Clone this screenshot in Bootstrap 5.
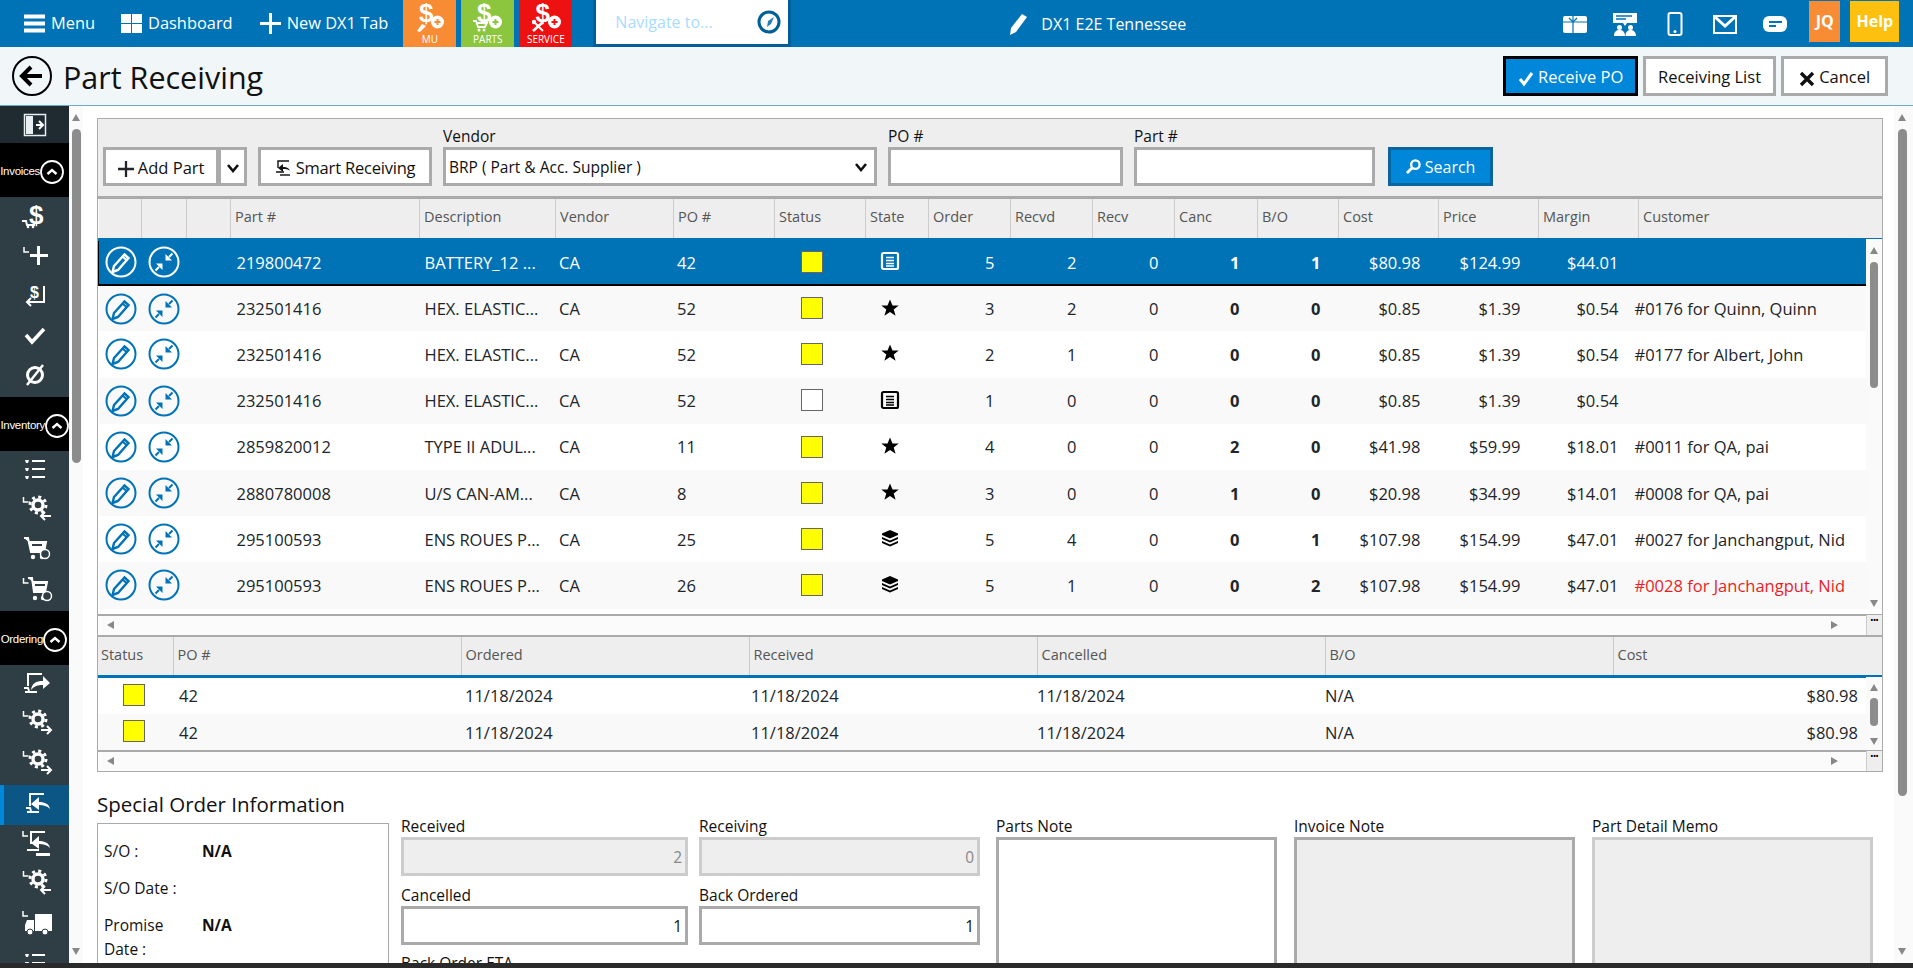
<!DOCTYPE html>
<html lang="en">
<head>
<meta charset="utf-8">
<title>Part Receiving</title>
<link href="https://cdn.jsdelivr.net/npm/bootstrap@5.3.0/dist/css/bootstrap.min.css" rel="stylesheet">
<style>
html,body{height:968px;overflow:hidden}
body{font-family:"Open Sans","Noto Sans",sans-serif;font-size:15.5px;color:#111;background:#fff}
.pg{height:968px;width:1913px}
.tbar{height:47px;background:#0073b7;color:#fff;flex:none}
.tlink{color:#fff;font-size:16.4px;gap:6px;white-space:nowrap;text-decoration:none}
.tlink svg{width:21px;height:21px}
.l1{margin-left:24px}.l2{margin-left:26px}.l3{margin-left:27px}
.tile{width:53px;height:47px;color:#fff;font-size:10px;line-height:12px;padding-bottom:2px;margin-right:5px}
.tile svg{width:44px;height:33px}
.t-mu{margin-left:15px;background:#f78c34}.t-pa{background:#8cc63f}.t-se{background:#ee1111;margin-right:21px}
.navbox{width:198px;height:47px;background:#fff;border-left:3px solid #005f99;border-right:3px solid #005f99;border-bottom:3px solid #005f99;padding:0 7px 0 19px;color:#a8dcff;font-size:16px}
.navbox svg{width:24px;height:24px}
.site{margin-left:215px;width:190px;gap:13px;font-size:16px;white-space:nowrap}
.site svg{width:22px;height:22px}
.ticons{margin-left:367px;gap:26px}
.ticons svg{width:24px;height:24px;display:block}
.tb-jq,.tb-help{height:41px;margin-top:-5px;color:#fff;font-weight:700;font-size:16px}
.tb-jq{width:31px;background:#f78c34;margin-left:-4px}
.tb-help{width:49px;background:#fdc00f;margin-left:-16px}
.phead{height:59px;background:#f1f6f9;border-bottom:1px solid #6fa8d0;flex:none;padding:0 25px 0 12px}
.phead h1{font-size:30.5px;font-weight:400;margin:2px 0 0 11px;color:#111}
.backc{width:40px;height:40px}
.hbtn{height:40px;border:3px solid #aaa;border-radius:0;background:#fff;color:#111;font-size:16.5px;padding:3px 0 0;white-space:nowrap;--bs-btn-hover-bg:#fff}
.hb-r{width:135px;background:#0087d9;border-color:#000;color:#fff;margin-right:5px}
.hb-l{width:133px;margin-right:5px}
.hb-c{width:107px}
.midsec{flex:1 1 0;min-height:0}
.sbar{width:69px;background:#2f3d45;overflow:hidden;flex:none}
.s-top{height:37px;background:#1f2a31}
.s-head{height:54px;flex:none;background:#000;color:#fff;font-family:"Liberation Sans",sans-serif;font-size:11.5px;letter-spacing:-.3px;justify-content:flex-end;white-space:nowrap;overflow:hidden;padding-top:4px}
.s-head svg{width:24px;height:24px;flex:none}
.s-i svg{margin-right:5px}.s-n svg{margin-right:0}.s-o svg{margin-right:2px}
.s-item{height:40px;flex:none;color:#fff}
.s-top.s-item{height:37px}
.s-item svg{width:36px;height:30px;margin-bottom:5px}
.s-top.s-item svg{margin-bottom:0}
.s-act{background:#0b5684;border-left:4px solid #0089d9}
.vstrip{width:14px;background:#fafafa;flex:none;position:relative}
.arr-u,.arr-d,.arr-l,.arr-r{position:absolute;width:0;height:0}
.arr-u{border-left:4.5px solid transparent;border-right:4.5px solid transparent;border-bottom:7px solid #888}
.arr-d{border-left:4.5px solid transparent;border-right:4.5px solid transparent;border-top:7px solid #888}
.arr-l{border-top:4.5px solid transparent;border-bottom:4.5px solid transparent;border-right:7px solid #888}
.arr-r{border-top:4.5px solid transparent;border-bottom:4.5px solid transparent;border-left:7px solid #888}
.thumb{position:absolute;background:#8c8c8c;border-radius:5px}
.sl-au{left:3px;top:8px}.sl-th{left:3px;top:23px;width:9px;height:334px}.sl-ad{left:3px;top:842px}
.mainc{width:1811px;flex:none;overflow:hidden;padding:12px 11px 0 14px}
.rstrip{width:19px}
.sr-au{left:4px;top:8px}.sr-th{left:4px;top:23px;width:9px;height:667px}.sr-ad{left:4px;top:842px}
.gridbox{width:1786px;border:1px solid #aaa}
.filt{height:80px;background:#eee;border-bottom:3px solid #aaa;padding:0 0 10px 5px;gap:11px;align-items:flex-end}
.fld label{display:block;font-size:15.5px;line-height:20px;height:21px}
.ctl{border:3px solid #aaa;border-radius:0;height:39px;background-color:#fff;font-size:15.5px;color:#111;box-shadow:none}
.f-add{height:39px}
.f-add .btn{border:3px solid #aaa;border-radius:0;background:#fff;color:#111;font-size:16.5px;padding:3px 0 0;height:39px;white-space:nowrap}
.f-add .b1{width:116px}.f-add .b2{width:29px;margin-left:-3px;padding-top:0}
.f-smart{width:174px;height:39px;border:3px solid #aaa;border-radius:0;background:#fff;color:#111;font-size:16.5px;padding:3px 0 0;white-space:nowrap;letter-spacing:-.2px}
.f-smart svg{width:17px;height:18px;vertical-align:-3px}
.w-ven{width:434px}.w-po{width:235px}.w-pn{width:241px}
.selb{padding:3px 30px 0 3px;background-image:url("data:image/svg+xml,%3Csvg xmlns='http://www.w3.org/2000/svg' viewBox='0 0 14 10'%3E%3Cpath d='M2 2l5 6 5-6' fill='none' stroke='%23111' stroke-width='2.6'/%3E%3C/svg%3E");background-size:14px 10px;background-position:right 6px center}
.f-srch{width:105px;height:39px;background:#0087d9;border:3px solid #0a64a0;border-radius:0;color:#fff;font-size:16px;padding:1px 0 0;margin-left:2px;--bs-btn-hover-bg:#0087d9}
.f-srch svg{width:15px;height:15px;vertical-align:-1px}
.g1{height:417px;position:relative;overflow:hidden;border-bottom:2px solid #aaa}
.g2{height:115px;position:relative;overflow:hidden;border-bottom:2px solid #aaa}
.dtab{table-layout:fixed;width:1784px;margin:0}
.dtab>:not(caption)>*>*{padding:0;border-width:0;vertical-align:middle;white-space:nowrap;overflow:hidden;box-shadow:none}
.dtab thead th{background:#eee;color:#555;font-weight:400;font-size:14.5px;border-right:1px solid #ccc;border-bottom:3px solid #0073b7;padding:0 0 3px 4px;height:40px}
.dtab thead th:last-child{border-right:0}
.dtab tbody tr{--bs-table-bg:#fff}
.dtab tbody tr:nth-child(even){--bs-table-bg:#f9f9f9}
.g1 tbody td{height:46.2px;font-size:16.5px;padding:2px 0 0 6px}
.g1 tbody td:nth-child(5){padding-left:5px}
.g1 tbody td:nth-child(6),.g1 tbody td:nth-child(7){padding-left:3.5px}
.g1 td.rt{text-align:right;padding-right:16px}
.g1 td.pr{padding-right:18px}
.g1 tbody td.st{padding:0 0 3px 26px}
.g1 tbody td.ct{text-align:center;padding:0 14px 2px 0}
.g1 td.bd{font-weight:700;padding-right:18px}
.g1 td.mn{padding-right:20px}
.g1 tbody td.cirs{padding:0 0 0 1px}
.g1 tbody td.cirs+td.cirs{padding-left:0}
.g1 tbody td.cust{padding-left:0;overflow:visible;text-indent:-4px}
.cirs svg{width:32px;height:32px;color:#0073b7;display:block;margin:0 auto}
tr.sel{--bs-table-bg:#0073b7!important;--bs-table-color:#fff}
tr.sel td{color:#fff;background:#0073b7;border-top:1px solid #000!important;border-bottom:2px solid #000!important}
tr.sel td:first-child{border-left:1px solid #000!important}
tr.sel .cirs svg{color:#fff}
.swt{display:inline-block;width:22px;height:22px;background:#ff0;border:1px solid #666;vertical-align:middle}
.swt.nil{background:#fff}
.sta{width:20px;height:20px;display:block;margin:0 auto;color:#000}
.sel .sta{color:#fff}
.rd{color:#ee1c25}
.col-a{width:43px}.col-b{width:45px}.col-c{width:44px}.col-d{width:189px}.col-e{width:136px}.col-f{width:118px}.col-g{width:101px}.col-h{width:91px}.col-i{width:63px}.col-j{width:82px}.col-k{width:83px}.col-l{width:81px}.col-m{width:100px}.col-n{width:244px}
.c2a{width:75px}.c2b{width:288px}.c2c{width:269px}
.g2 tbody td{font-size:16.5px;padding:2px 0 0 4px}
.g2 tbody td:nth-child(1){padding:0 0 4px 25px}
.g2 tbody td:nth-child(2){padding-left:6px}
.g2 tbody td:nth-child(4){padding-left:2px}
.g2 tbody td:nth-child(5),.g2 tbody td:nth-child(6){padding-left:0}
.g2 tbody tr:first-child td{height:38px}
.g2 tbody tr:last-child td{height:36px}
.g2 thead th{height:39px;padding-bottom:2px}
.g2 thead th:first-child{padding-left:3px}
.vs{position:absolute;right:0;top:40px;bottom:6px;width:16px;background:#fafafa}
.g2 .vs{bottom:0}
.v1au{left:4px;top:8px}.v1th{left:4px;top:23px;width:8px;height:126px}.v1ad{left:4px;bottom:1px}
.v2au{left:4px;top:7px}.v2th{left:4px;top:21px;width:8px;height:28px}.v2ad{left:4px;bottom:5px}
.hs{height:21px;position:relative;background:#fbfbfb;border-bottom:2px solid #aaa;flex:none}
.hs.last{border-bottom:0;height:19px}
.hl{left:9px;top:5px}.hr{right:44px;top:5px}
.dots{position:absolute;right:0;top:-1px;bottom:0;width:16px;background:#eee;border-left:1px solid #ccc;font-size:7px;line-height:12px;text-align:center;font-weight:700;letter-spacing:0;color:#000}
.soi{margin-top:17px}
.soi-l{width:292px;flex:none}
.soi-l h2{font-size:20.5px;font-weight:400;line-height:30px;height:30px;margin:0;color:#111;white-space:nowrap}
.infobox{margin-top:4px;border:1px solid #aaa;height:200px;padding:15px 6px}
.irow{line-height:24px;font-size:15.5px;margin-bottom:13px}
.irow .k{width:98px;flex:none}
.irow .v{font-weight:700}
.irow.tw{margin-bottom:0}
.soi-c{margin-top:27px;margin-left:12px;flex:none}
.w287{width:287px}.w281{width:281px;margin-left:11px}
.w282{width:281px;margin-left:17px}.w282a{width:281px;margin-left:16px}
.lb{font-size:15.5px;line-height:20px;height:21px;white-space:nowrap}
.ro{background:#eee;border-color:#ccc;color:#888;text-align:right;padding:0 3px}
.ed{text-align:right;padding:0 3px;color:#111;margin-bottom:8px}
.ro{margin-bottom:9px}
.ctl:disabled{background:#eee}
.ta{height:170px;resize:none;padding:3px;display:block;width:100%}
.taw{border-width:3px;border-color:#aaa}
.tag{background:#eee;border-color:#aaa}
.tal{background:#eee;border-color:#ccc}
.btm{height:5px;background:#2a2a2a;flex:none}
</style>
</head>
<body>
<svg width="0" height="0" class="position-absolute">
<defs>
<symbol id="burger" viewBox="0 0 21 21"><path d="M0 2h21v4H0zM0 9h21v4H0zM0 16h21v4H0z" fill="#fff" transform="translate(0 -.5)"/></symbol>
<symbol id="dash" viewBox="0 0 21 21"><path d="M0 1h10v9H0zM11 1h10v9H11zM0 11h10v9H0zM11 11h10v9H11z" fill="#fff"/></symbol>
<symbol id="plusw" viewBox="0 0 21 21"><path d="M9 0h3v9h9v3h-9v9H9v-9H0V9h9z" fill="currentColor"/></symbol>
<symbol id="penc" viewBox="0 0 22 22"><path d="M16 1l5 3-11 15-6 3 1-7z" fill="#fff"/></symbol>
<symbol id="ic-compass" viewBox="0 0 24 24"><circle cx="12" cy="12" r="10" fill="none" stroke="#005f99" stroke-width="3"/><path d="M17 7l-3 7-4 3 1-6z" fill="#2a7fb5"/></symbol>
<symbol id="ic-card" viewBox="0 0 24 24"><rect x="0" y="4" width="24" height="17" rx="2" fill="#fff"/><path d="M0 10h24M10 4v17" stroke="#0073b7" stroke-width="1.2"/><path d="M10 10l-4-4M10 10l4-4" stroke="#0073b7" stroke-width="1.2"/></symbol>
<symbol id="ic-team" viewBox="0 0 24 24"><path d="M0 1h24v10H14l-2 3-2-3H0z" fill="#fff"/><path d="M3 4h16M3 7h10" stroke="#0073b7" stroke-width="1.5"/><circle cx="6.500" cy="15.500" r="2.500" fill="#fff"/><circle cx="17.500" cy="15.500" r="2.500" fill="#fff"/><path d="M1 24c0-5 3-6 5.500-6S12 19 12 24zM12.500 24c0-5 3-6 5-6s5.500 1 5.500 6z" fill="#fff"/></symbol>
<symbol id="ic-phone" viewBox="0 0 24 24"><rect x="5.500" y="1" width="13" height="22" rx="2" fill="none" stroke="#fff" stroke-width="2"/><circle cx="12" cy="19.500" r="1.500" fill="#fff"/></symbol>
<symbol id="ic-mail" viewBox="0 0 24 24"><rect x="1" y="4" width="22" height="17" fill="none" stroke="#fff" stroke-width="2"/><path d="M2 5l10 9 10-9" fill="none" stroke="#fff" stroke-width="3"/></symbol>
<symbol id="ic-pill" viewBox="0 0 24 24"><rect x="0" y="4" width="24" height="16" rx="6" fill="#fff"/><path d="M6 10h13M6 14h7" stroke="#0073b7" stroke-width="2"/></symbol>
<symbol id="t-mu" viewBox="0 0 44 33"><text x="11" y="22" font-family="Liberation Sans" font-weight="700" font-size="26" fill="#fff">$</text><circle cx="29.500" cy="22" r="6.500" fill="#fff"/><path d="M26.500 22h6M29.500 19v6" stroke="#f78c34" stroke-width="2"/><path d="M9 31l5-7 4 2-6 6z" fill="#fff"/></symbol>
<symbol id="t-pa" viewBox="0 0 44 33"><text x="11" y="22" font-family="Liberation Sans" font-weight="700" font-size="26" fill="#fff">$</text><circle cx="29.500" cy="22" r="6.500" fill="#fff"/><path d="M26.500 22h6M29.500 19v6" stroke="#8cc63f" stroke-width="2"/><path d="M7 21h3l2 6h7l2-4H11" fill="none" stroke="#fff" stroke-width="1.800"/><circle cx="13" cy="30" r="1.500" fill="#fff"/><circle cx="18" cy="30" r="1.500" fill="#fff"/></symbol>
<symbol id="t-se" viewBox="0 0 44 33"><text x="11.500" y="22" font-family="Liberation Sans" font-weight="700" font-size="26" fill="#fff">$</text><circle cx="30.500" cy="22" r="6.500" fill="#fff"/><path d="M27.500 22h6M30.500 19v6" stroke="#e11" stroke-width="2"/><path d="M9 31l10-9" stroke="#fff" stroke-width="2.600"/><path d="M10 22l9 9" stroke="#fff" stroke-width="2"/><circle cx="10" cy="22" r="2.200" fill="#fff"/></symbol>
<symbol id="back" viewBox="0 0 40 40"><circle cx="20" cy="20" r="19" fill="none" stroke="#000" stroke-width="2"/><path d="M30 20H11M19 11l-9 9 9 9" fill="none" stroke="#000" stroke-width="4"/></symbol>
<symbol id="chk" viewBox="0 0 16 16"><path d="M2 8l4 5 8-11" fill="none" stroke="currentColor" stroke-width="3"/></symbol>
<symbol id="xx" viewBox="0 0 16 16"><path d="M2 2l12 12M14 2L2 14" fill="none" stroke="#111" stroke-width="3.400"/></symbol>
<symbol id="chev" viewBox="0 0 14 10"><path d="M2 2l5 6 5-6" fill="none" stroke="#111" stroke-width="2.600"/></symbol>
<symbol id="mag" viewBox="0 0 16 16"><circle cx="10" cy="6" r="4.500" fill="none" stroke="#fff" stroke-width="2.500"/><path d="M7 9l-6 6" stroke="#fff" stroke-width="3"/></symbol>
<symbol id="edit" viewBox="0 0 32 32"><circle cx="16" cy="16" r="14.500" fill="none" stroke="currentColor" stroke-width="2"/><path d="M19.500 8.500l4 3.500L13 24l-5.500 2 1.500-6z" fill="none" stroke="currentColor" stroke-width="2.400"/><path d="M17.500 10.500l4 3.500" stroke="currentColor" stroke-width="2"/></symbol>
<symbol id="shrink" viewBox="0 0 32 32"><circle cx="16" cy="16" r="14.500" fill="none" stroke="currentColor" stroke-width="2"/><path d="M17.500 14.500v-6.500l6.500 6.500zM14.500 17.500v6.500l-6.500-6.500z" fill="currentColor"/><path d="M21 11l3.500-3.500M11 21l-3.500 3.500" stroke="currentColor" stroke-width="2"/></symbol>
<symbol id="star" viewBox="0 0 20 20"><path d="M10 1.500l2.500 6h6.200l-5 3.900 1.900 6.300L10 14l-5.600 3.700 1.900-6.300-5-3.900h6.200z" fill="currentColor"/></symbol>
<symbol id="doc" viewBox="0 0 20 20"><rect x="2" y="2" width="16" height="16" rx="1.500" fill="none" stroke="currentColor" stroke-width="2.200"/><path d="M6 6.500h8M6 9.500h8M6 12.500h8M6 15h8" stroke="currentColor" stroke-width="1.400"/></symbol>
<symbol id="stack" viewBox="0 0 20 20"><path d="M10 2l8 3.500v1.500l-8 3.500L2 7V5.500z" fill="currentColor"/><path d="M2 9l8 3.500L18 9v2l-8 3.500L2 11z" fill="currentColor"/><path d="M2 13l8 3.500 8-3.500v2l-8 3.500L2 15z" fill="currentColor"/></symbol>
<symbol id="up" viewBox="0 0 24 24"><circle cx="12" cy="12" r="11" fill="none" stroke="#fff" stroke-width="1.800"/><path d="M7.500 14l4.500-4 4.500 4" fill="none" stroke="#fff" stroke-width="2.400"/></symbol>
<symbol id="door" viewBox="0 0 36 30"><rect x="7.500" y="4.500" width="21" height="21" fill="none" stroke="#e8eef2" stroke-width="1.500"/><path d="M9 6h7v18H9z" fill="#e8eef2"/><path d="M19 15h7M22 11l4 4-4 4" fill="none" stroke="#fff" stroke-width="2"/></symbol>
<symbol id="s-dollar" viewBox="0 0 36 30"><text x="12" y="24" font-family="Liberation Sans" font-weight="700" font-size="26" fill="#fff">$</text><path d="M5 21h4l1 4h8" fill="none" stroke="#fff" stroke-width="2"/><circle cx="11" cy="27" r="1.300" fill="#fff"/><circle cx="16" cy="27" r="1.300" fill="#fff"/></symbol>
<symbol id="s-plus" viewBox="0 0 36 30"><path d="M7 7v5h5" fill="none" stroke="#fff" stroke-width="1.500"/><path d="M20 6h3v8h8v3h-8v8h-3v-8h-7v-3h7z" fill="#fff"/></symbol>
<symbol id="s-ret" viewBox="0 0 36 30"><text x="13" y="18" font-family="Liberation Sans" font-weight="700" font-size="16" fill="#fff">$</text><path d="M27 6v16H10M14 18l-4 4 4 4" fill="none" stroke="#fff" stroke-width="2"/></symbol>
<symbol id="s-chk" viewBox="0 0 36 30"><path d="M9 15l6 7 12-13" fill="none" stroke="#fff" stroke-width="3.500"/></symbol>
<symbol id="s-void" viewBox="0 0 36 30"><circle cx="18" cy="15" r="7.500" fill="none" stroke="#fff" stroke-width="3"/><path d="M10 25L26 5" stroke="#fff" stroke-width="2.500"/></symbol>
<symbol id="s-list" viewBox="0 0 36 30"><path d="M8 6h4l-1 3H9zM8 14h4l-1 3H9zM8 22h4l-1 3H9z" fill="#fff"/><path d="M15 7h13M15 15h13M15 23h13" stroke="#fff" stroke-width="2"/></symbol>
<symbol id="s-gear" viewBox="0 0 36 30"><path d="M6.500 3v5h5" fill="none" stroke="#fff" stroke-width="1.500"/><circle cx="21" cy="11" r="5" fill="none" stroke="#fff" stroke-width="3.400"/><circle cx="21" cy="11" r="8" fill="none" stroke="#fff" stroke-width="3" stroke-dasharray="3 3.280"/><path d="M34 22H24M28 18l-4 4 4 4" fill="none" stroke="#fff" stroke-width="2"/></symbol>
<symbol id="s-gear2" viewBox="0 0 36 30"><path d="M6.500 3v5h5" fill="none" stroke="#fff" stroke-width="1.500"/><circle cx="21" cy="11" r="5" fill="none" stroke="#fff" stroke-width="3.400"/><circle cx="21" cy="11" r="8" fill="none" stroke="#fff" stroke-width="3" stroke-dasharray="3 3.280"/><path d="M24 22h10M30 18l4 4-4 4" fill="none" stroke="#fff" stroke-width="2"/></symbol>
<symbol id="s-cart" viewBox="0 0 36 30"><path d="M7 4h4l3 14h13l2-10H12" fill="#fff" stroke="#fff" stroke-width="2"/><path d="M15 11h10" stroke="#2f3d45" stroke-width="2"/><circle cx="16" cy="23" r="2.200" fill="#fff"/><circle cx="25" cy="23" r="2.200" fill="#fff"/><circle cx="28" cy="20" r="4.500" fill="#2f3d45" stroke="#fff" stroke-width="1.500"/></symbol>
<symbol id="s-cart2" viewBox="0 0 36 30"><path d="M6.500 4v5h5" fill="none" stroke="#fff" stroke-width="1.500"/><path d="M11 4h4l2 14h11l2-10H16" fill="#fff" stroke="#fff" stroke-width="2"/><path d="M18 11h10" stroke="#2f3d45" stroke-width="2"/><circle cx="18" cy="24" r="2.200" fill="#fff"/><circle cx="26" cy="24" r="2.200" fill="#fff"/><circle cx="30" cy="22" r="4.500" fill="#2f3d45" stroke="#fff" stroke-width="1.500"/></symbol>
<symbol id="s-send" viewBox="0 0 36 30"><path d="M11 18V6h14M8 24h12" fill="none" stroke="#fff" stroke-width="2"/><path d="M7 20h4l1 3" fill="none" stroke="#fff" stroke-width="2"/><path d="M14 22c1-7 5-9 12-9V8l7 7-7 6v-4c-5 0-9 1-12 5z" fill="#fff"/></symbol>
<symbol id="s-recv" viewBox="0 0 36 30"><path d="M11 18V6h14M8 24h12" fill="none" stroke="#fff" stroke-width="2"/><path d="M7 20h4l1 3" fill="none" stroke="#fff" stroke-width="2"/><path d="M31 21c-1-5-5-7-11-7V9l-8 7 8 6v-5c5 0 8 1 11 4z" fill="#fff"/></symbol>
<symbol id="s-smart" viewBox="0 0 36 30"><path d="M6 3v5h5" fill="none" stroke="#fff" stroke-width="1.500"/><path d="M14 16V4h14M10 22h12" fill="none" stroke="#fff" stroke-width="2"/><path d="M33 20c-1-5-5-7-11-7V8l-8 7 8 6v-5c5 0 8 1 11 4z" fill="#fff"/><path d="M19 25h14v3H19z" fill="#fff"/></symbol>
<symbol id="s-truck" viewBox="0 0 36 30"><path d="M6 3v5h5" fill="none" stroke="#fff" stroke-width="1.500"/><path d="M18 6h17v17H18zM10 12h7v11H8v-6z" fill="#fff"/><circle cx="13" cy="24" r="3" fill="#fff" stroke="#2f3d45"/><circle cx="28" cy="24" r="3" fill="#fff" stroke="#2f3d45"/></symbol>
<symbol id="smartk" viewBox="0 0 17 18"><path d="M3 9V2h11M1 13h8" fill="none" stroke="#111" stroke-width="1.400"/><path d="M15 12c-1-3-3-4-7-4V5L3 9l5 4v-3c3 0 5 0 7 2z" fill="#111"/><path d="M5 15h10v2H5z" fill="#555"/></symbol>
</defs>
</svg>

<div class="pg d-flex flex-column">
  <div class="tbar d-flex align-items-center">
    <a class="tlink d-flex align-items-center l1"><svg><use href="#burger"/></svg>Menu</a>
    <a class="tlink d-flex align-items-center l2"><svg><use href="#dash"/></svg>Dashboard</a>
    <a class="tlink d-flex align-items-center l3"><svg class="text-white"><use href="#plusw"/></svg>New DX1 Tab</a>
    <div class="tile t-mu d-flex flex-column align-items-center justify-content-end"><svg><use href="#t-mu"/></svg>MU</div>
    <div class="tile t-pa d-flex flex-column align-items-center justify-content-end"><svg><use href="#t-pa"/></svg>PARTS</div>
    <div class="tile t-se d-flex flex-column align-items-center justify-content-end"><svg><use href="#t-se"/></svg>SERVICE</div>
    <div class="navbox d-flex align-items-center justify-content-between align-self-start"><span>Navigate to...</span><svg><use href="#ic-compass"/></svg></div>
    <div class="site d-flex align-items-center"><svg><use href="#penc"/></svg>DX1 E2E Tennessee</div>
    <div class="ticons d-flex align-items-center">
      <svg><use href="#ic-card"/></svg><svg><use href="#ic-team"/></svg><svg><use href="#ic-phone"/></svg><svg><use href="#ic-mail"/></svg><svg><use href="#ic-pill"/></svg>
      <div class="tb-jq d-flex align-items-center justify-content-center">JQ</div>
      <div class="tb-help d-flex align-items-center justify-content-center">Help</div>
    </div>
  </div>

  <div class="phead d-flex align-items-center">
    <svg class="backc"><use href="#back"/></svg>
    <h1>Part Receiving</h1>
    <div class="ms-auto d-flex">
      <button class="btn hbtn hb-r"><svg width="16" height="16" class="text-white"><use href="#chk"/></svg> Receive PO</button>
      <button class="btn hbtn hb-l">Receiving List</button>
      <button class="btn hbtn hb-c"><svg width="16" height="16"><use href="#xx"/></svg> Cancel</button>
    </div>
  </div>

  <div class="midsec d-flex">
    <div class="sbar d-flex flex-column">
      <div class="s-top d-flex align-items-center justify-content-center s-item"><svg><use href="#door"/></svg></div>
      <div class="s-head s-i d-flex align-items-center">Invoices<svg><use href="#up"/></svg></div>
      <div class="s-item d-flex align-items-center justify-content-center"><svg><use href="#s-dollar"/></svg></div>
      <div class="s-item d-flex align-items-center justify-content-center"><svg><use href="#s-plus"/></svg></div>
      <div class="s-item d-flex align-items-center justify-content-center"><svg><use href="#s-ret"/></svg></div>
      <div class="s-item d-flex align-items-center justify-content-center"><svg><use href="#s-chk"/></svg></div>
      <div class="s-item d-flex align-items-center justify-content-center"><svg><use href="#s-void"/></svg></div>
      <div class="s-head s-n d-flex align-items-center">Inventory<svg><use href="#up"/></svg></div>
      <div class="s-item d-flex align-items-center justify-content-center"><svg><use href="#s-list"/></svg></div>
      <div class="s-item d-flex align-items-center justify-content-center"><svg><use href="#s-gear"/></svg></div>
      <div class="s-item d-flex align-items-center justify-content-center"><svg><use href="#s-cart"/></svg></div>
      <div class="s-item d-flex align-items-center justify-content-center"><svg><use href="#s-cart2"/></svg></div>
      <div class="s-head s-o d-flex align-items-center">Ordering<svg><use href="#up"/></svg></div>
      <div class="s-item d-flex align-items-center justify-content-center"><svg><use href="#s-send"/></svg></div>
      <div class="s-item d-flex align-items-center justify-content-center"><svg><use href="#s-gear2"/></svg></div>
      <div class="s-item d-flex align-items-center justify-content-center"><svg><use href="#s-gear2"/></svg></div>
      <div class="s-item s-act d-flex align-items-center justify-content-center"><svg><use href="#s-recv"/></svg></div>
      <div class="s-item d-flex align-items-center justify-content-center"><svg><use href="#s-smart"/></svg></div>
      <div class="s-item d-flex align-items-center justify-content-center"><svg><use href="#s-gear"/></svg></div>
      <div class="s-item d-flex align-items-center justify-content-center"><svg><use href="#s-truck"/></svg></div>
      <div class="s-item d-flex align-items-center justify-content-center"><svg><use href="#s-list"/></svg></div>
    </div>
    <div class="vstrip"><span class="arr-u sl-au"></span><span class="thumb sl-th"></span><span class="arr-d sl-ad"></span></div>

    <div class="mainc">
      <div class="gridbox">
        <div class="filt d-flex">
          <div class="btn-group f-add"><button class="btn b1"><svg width="16" height="16" class="text-dark"><use href="#plusw"/></svg> Add Part</button><button class="btn b2"><svg width="14" height="10"><use href="#chev"/></svg></button></div>
          <button class="btn f-smart"><svg><use href="#smartk"/></svg> Smart Receiving</button>
          <div class="fld w-ven"><label>Vendor</label><select class="form-select ctl selb"><option>BRP ( Part &amp; Acc. Supplier )</option></select></div>
          <div class="fld w-po"><label>PO #</label><input class="form-control ctl" type="text"></div>
          <div class="fld w-pn"><label>Part #</label><input class="form-control ctl" type="text"></div>
          <button class="btn f-srch"><svg><use href="#mag"/></svg> Search</button>
        </div>

        <div class="g1">
          <table class="table dtab">
            <colgroup><col class="col-a"><col class="col-b"><col class="col-c"><col class="col-d"><col class="col-e"><col class="col-f"><col class="col-g"><col class="col-h"><col class="col-i"><col class="col-j"><col class="col-j"><col class="col-j"><col class="col-k"><col class="col-l"><col class="col-m"><col class="col-m"><col class="col-m"><col class="col-n"></colgroup>
            <thead><tr><th></th><th></th><th></th><th>Part #</th><th>Description</th><th>Vendor</th><th>PO #</th><th>Status</th><th>State</th><th>Order</th><th>Recvd</th><th>Recv</th><th>Canc</th><th>B/O</th><th>Cost</th><th>Price</th><th>Margin</th><th>Customer</th></tr></thead>
            <tbody>
              <tr class="sel"><td class="cirs"><svg><use href="#edit"/></svg></td><td class="cirs"><svg><use href="#shrink"/></svg></td><td></td><td>219800472</td><td>BATTERY_12 ...</td><td>CA</td><td>42</td><td class="st"><span class="swt"></span></td><td class="ct"><svg class="sta"><use href="#doc"/></svg></td><td class="rt">5</td><td class="rt">2</td><td class="rt">0</td><td class="rt bd">1</td><td class="rt bd">1</td><td class="rt pr">$80.98</td><td class="rt pr">$124.99</td><td class="rt mn">$44.01</td><td class="cust"></td></tr>
              <tr><td class="cirs"><svg><use href="#edit"/></svg></td><td class="cirs"><svg><use href="#shrink"/></svg></td><td></td><td>232501416</td><td>HEX. ELASTIC...</td><td>CA</td><td>52</td><td class="st"><span class="swt"></span></td><td class="ct"><svg class="sta"><use href="#star"/></svg></td><td class="rt">3</td><td class="rt">2</td><td class="rt">0</td><td class="rt bd">0</td><td class="rt bd">0</td><td class="rt pr">$0.85</td><td class="rt pr">$1.39</td><td class="rt mn">$0.54</td><td class="cust">#0176 for Quinn, Quinn</td></tr>
              <tr><td class="cirs"><svg><use href="#edit"/></svg></td><td class="cirs"><svg><use href="#shrink"/></svg></td><td></td><td>232501416</td><td>HEX. ELASTIC...</td><td>CA</td><td>52</td><td class="st"><span class="swt"></span></td><td class="ct"><svg class="sta"><use href="#star"/></svg></td><td class="rt">2</td><td class="rt">1</td><td class="rt">0</td><td class="rt bd">0</td><td class="rt bd">0</td><td class="rt pr">$0.85</td><td class="rt pr">$1.39</td><td class="rt mn">$0.54</td><td class="cust">#0177 for Albert, John</td></tr>
              <tr><td class="cirs"><svg><use href="#edit"/></svg></td><td class="cirs"><svg><use href="#shrink"/></svg></td><td></td><td>232501416</td><td>HEX. ELASTIC...</td><td>CA</td><td>52</td><td class="st"><span class="swt nil"></span></td><td class="ct"><svg class="sta"><use href="#doc"/></svg></td><td class="rt">1</td><td class="rt">0</td><td class="rt">0</td><td class="rt bd">0</td><td class="rt bd">0</td><td class="rt pr">$0.85</td><td class="rt pr">$1.39</td><td class="rt mn">$0.54</td><td class="cust"></td></tr>
              <tr><td class="cirs"><svg><use href="#edit"/></svg></td><td class="cirs"><svg><use href="#shrink"/></svg></td><td></td><td>2859820012</td><td>TYPE II ADUL...</td><td>CA</td><td>11</td><td class="st"><span class="swt"></span></td><td class="ct"><svg class="sta"><use href="#star"/></svg></td><td class="rt">4</td><td class="rt">0</td><td class="rt">0</td><td class="rt bd">2</td><td class="rt bd">0</td><td class="rt pr">$41.98</td><td class="rt pr">$59.99</td><td class="rt mn">$18.01</td><td class="cust">#0011 for QA, pai</td></tr>
              <tr><td class="cirs"><svg><use href="#edit"/></svg></td><td class="cirs"><svg><use href="#shrink"/></svg></td><td></td><td>2880780008</td><td>U/S CAN-AM...</td><td>CA</td><td>8</td><td class="st"><span class="swt"></span></td><td class="ct"><svg class="sta"><use href="#star"/></svg></td><td class="rt">3</td><td class="rt">0</td><td class="rt">0</td><td class="rt bd">1</td><td class="rt bd">0</td><td class="rt pr">$20.98</td><td class="rt pr">$34.99</td><td class="rt mn">$14.01</td><td class="cust">#0008 for QA, pai</td></tr>
              <tr><td class="cirs"><svg><use href="#edit"/></svg></td><td class="cirs"><svg><use href="#shrink"/></svg></td><td></td><td>295100593</td><td>ENS ROUES P...</td><td>CA</td><td>25</td><td class="st"><span class="swt"></span></td><td class="ct"><svg class="sta"><use href="#stack"/></svg></td><td class="rt">5</td><td class="rt">4</td><td class="rt">0</td><td class="rt bd">0</td><td class="rt bd">1</td><td class="rt pr">$107.98</td><td class="rt pr">$154.99</td><td class="rt mn">$47.01</td><td class="cust">#0027 for Janchangput, Nid</td></tr>
              <tr><td class="cirs"><svg><use href="#edit"/></svg></td><td class="cirs"><svg><use href="#shrink"/></svg></td><td></td><td>295100593</td><td>ENS ROUES P...</td><td>CA</td><td>26</td><td class="st"><span class="swt"></span></td><td class="ct"><svg class="sta"><use href="#stack"/></svg></td><td class="rt">5</td><td class="rt">1</td><td class="rt">0</td><td class="rt bd">0</td><td class="rt bd">2</td><td class="rt pr">$107.98</td><td class="rt pr">$154.99</td><td class="rt mn">$47.01</td><td class="cust rd">#0028 for Janchangput, Nid</td></tr>
            </tbody>
          </table>
          <div class="vs"><span class="arr-u v1au"></span><span class="thumb v1th"></span><span class="arr-d v1ad"></span></div>
        </div>
        <div class="hs"><span class="arr-l hl"></span><span class="arr-r hr"></span><span class="dots">•••</span></div>

        <div class="g2">
          <table class="table dtab">
            <colgroup><col class="c2a"><col class="c2b"><col class="c2b"><col class="c2b"><col class="c2b"><col class="c2b"><col class="c2c"></colgroup>
            <thead><tr><th>Status</th><th>PO #</th><th>Ordered</th><th>Received</th><th>Cancelled</th><th>B/O</th><th>Cost</th></tr></thead>
            <tbody>
              <tr><td><span class="swt"></span></td><td>42</td><td>11/18/2024</td><td>11/18/2024</td><td>11/18/2024</td><td>N/A</td><td class="text-end pe-4">$80.98</td></tr>
              <tr><td><span class="swt"></span></td><td>42</td><td>11/18/2024</td><td>11/18/2024</td><td>11/18/2024</td><td>N/A</td><td class="text-end pe-4">$80.98</td></tr>
            </tbody>
          </table>
          <div class="vs"><span class="arr-u v2au"></span><span class="thumb v2th"></span><span class="arr-d v2ad"></span></div>
        </div>
        <div class="hs last"><span class="arr-l hl"></span><span class="arr-r hr"></span><span class="dots">•••</span></div>
      </div>

      <div class="soi d-flex">
        <div class="soi-l">
          <h2>Special Order Information</h2>
          <div class="infobox">
            <div class="irow d-flex"><span class="k">S/O :</span><span class="v">N/A</span></div>
            <div class="irow d-flex"><span class="k">S/O Date :</span></div>
            <div class="irow tw d-flex"><span class="k">Promise<br>Date :</span><span class="v">N/A</span></div>
          </div>
        </div>
        <div class="soi-c d-flex">
          <div class="w287">
            <div class="lb">Received</div><input class="form-control ctl ro" value="2" disabled>
            <div class="lb">Cancelled</div><input class="form-control ctl ed" value="1">
            <div class="lb">Back Order ETA</div>
          </div>
          <div class="w281">
            <div class="lb">Receiving</div><input class="form-control ctl ro" value="0" disabled>
            <div class="lb">Back Ordered</div><input class="form-control ctl ed" value="1">
          </div>
          <div class="w282a"><div class="lb">Parts Note</div><textarea class="form-control ctl ta taw"></textarea></div>
          <div class="w282"><div class="lb">Invoice Note</div><textarea class="form-control ctl ta tag" disabled></textarea></div>
          <div class="w282"><div class="lb">Part Detail Memo</div><textarea class="form-control ctl ta tal" disabled></textarea></div>
        </div>
      </div>
    </div>
    <div class="vstrip rstrip"><span class="arr-u sr-au"></span><span class="thumb sr-th"></span><span class="arr-d sr-ad"></span></div>
  </div>
  <div class="btm"></div>
</div>
<script src="https://cdn.jsdelivr.net/npm/bootstrap@5.3.0/dist/js/bootstrap.bundle.min.js"></script>
</body>
</html>
